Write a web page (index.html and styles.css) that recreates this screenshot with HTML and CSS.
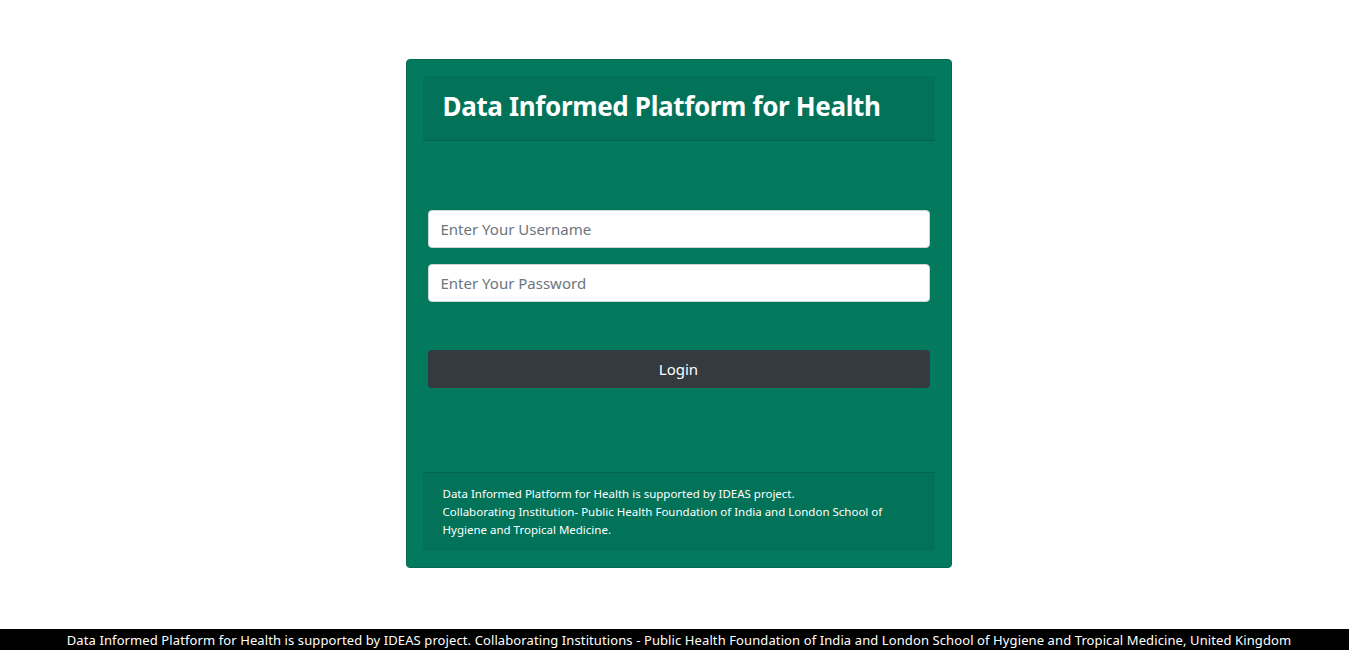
FILE: index.html
```html
<!DOCTYPE html>
<html lang="en">
<head>
<meta charset="utf-8">
<title>Data Informed Platform for Health</title>
<link rel="stylesheet" href="styles.css">
</head>
<body>
<div class="page">
  <main class="main">
    <div class="card">
      <div class="card-header">
        <h1 class="title">Data Informed Platform for Health</h1>
      </div>
      <form class="card-body">
        <input class="field" type="text" placeholder="Enter Your Username">
        <input class="field" type="password" placeholder="Enter Your Password">
        <button class="btn" type="button">Login</button>
      </form>
      <div class="card-footer">
        Data Informed Platform for Health is supported by IDEAS project.<br>
        Collaborating Institution- Public Health Foundation of India and London School of Hygiene and Tropical Medicine.
      </div>
    </div>
  </main>
  <footer class="site-footer">Data Informed Platform for Health is supported by IDEAS project. Collaborating Institutions - Public Health Foundation of India and London School of Hygiene and Tropical Medicine, United Kingdom</footer>
</div>
</body>
</html>
```
FILE: styles.css
```css
* { box-sizing: border-box; }
html, body { margin: 0; padding: 0; }
body {
  font-family: "Noto Sans", "Open Sans", sans-serif;
  background: #fff;
  color: #212529;
}
.page {
  min-height: 100vh;
  display: flex;
  flex-direction: column;
}
.main {
  display: flex;
  justify-content: center;
  padding: 59px 0 0 8px;
}
.card {
  width: 546px;
  height: 509px;
  background: #037a5e;
  border: 1px solid #026b52;
  border-radius: 4px;
  padding: 16px;
  display: flex;
  flex-direction: column;
}
.card-header {
  background: rgba(0, 0, 0, 0.05);
  border-bottom: 1px solid rgba(0, 0, 0, 0.125);
  padding: 13px 20px 17px;
}
.title {
  margin: 0;
  color: #fff;
  font-size: 26px;
  font-weight: 700;
  line-height: 34px;
  letter-spacing: -0.35px;
}
.card-body {
  flex: 1;
  display: flex;
  flex-direction: column;
  padding: 69px 5px 0;
  margin: 0;
}
.field {
  height: 38px;
  border: 1px solid #ced4da;
  border-radius: 4px;
  padding: 6px 12px;
  font-family: inherit;
  font-size: 15px;
  color: #495057;
  background: #fff;
  margin-bottom: 16px;
}
.field::placeholder { color: #6c757d; }
.btn {
  margin-top: 32px;
  height: 38px;
  border: 0;
  border-radius: 4px;
  background: #343a40;
  color: #fff;
  font-family: inherit;
  font-size: 15px;
}
.card-footer {
  background: rgba(0, 0, 0, 0.05);
  border-top: 1px solid rgba(0, 0, 0, 0.125);
  padding: 12px 20px;
  color: #fff;
  font-size: 11.5px;
  line-height: 18px;
}
.site-footer {
  margin-top: auto;
  height: 21px;
  padding: 1px 0 0 9px;
  background: #000;
  color: #fff;
  text-align: center;
  font-size: 13px;
  line-height: 20px;
  letter-spacing: 0.1px;
  white-space: nowrap;
  overflow: hidden;
}
```
